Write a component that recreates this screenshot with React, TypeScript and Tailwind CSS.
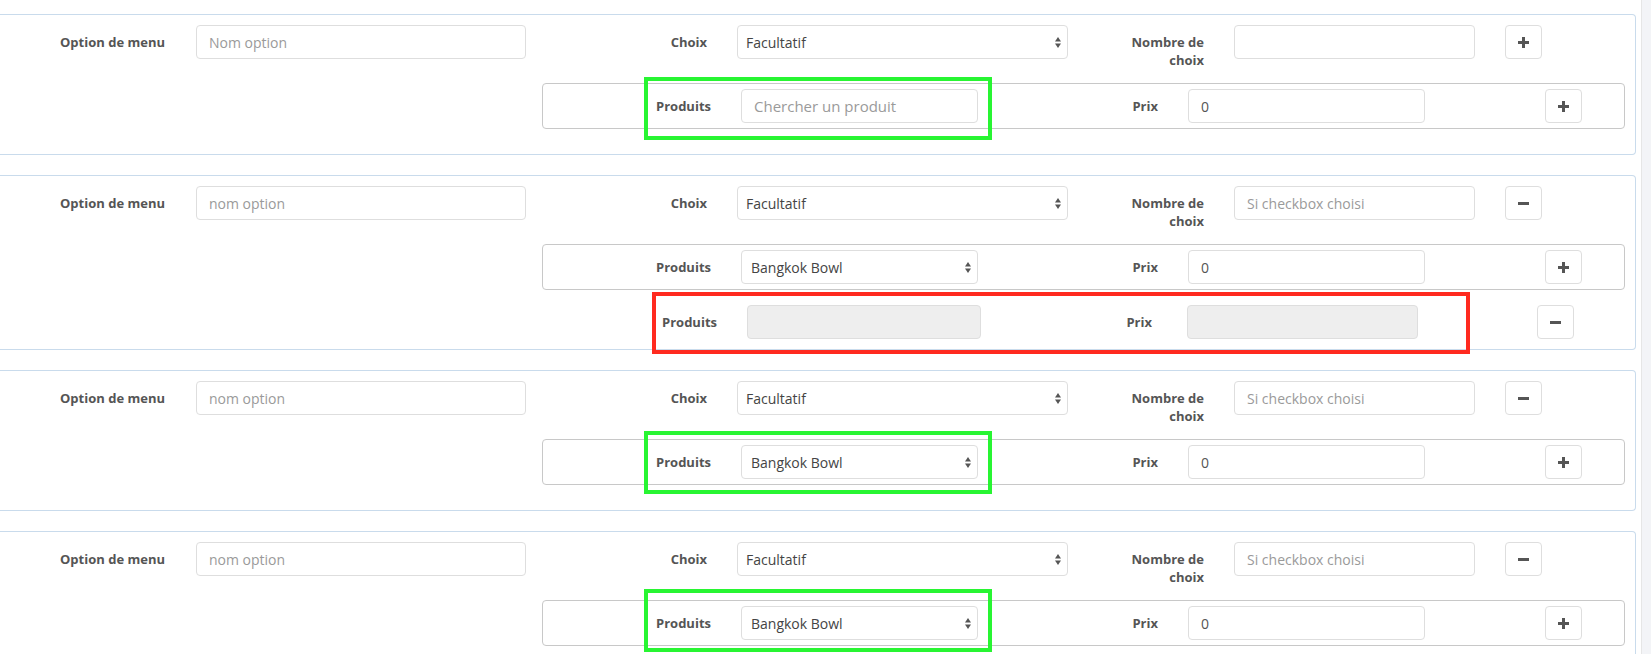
import React from 'react'

// ── petits morceaux réutilisés par chaque bloc « option de menu » ──

function Label({ className, children }: { className: string; children: React.ReactNode }) {
 return (
  <div className={`${className} shrink-0 text-right text-[13px] font-bold leading-[18px] text-[#555] pt-[8px]`}>
   {children}
  </div>
 )
}

function Input({ className, placeholder, value, disabled, large }: {
 className: string; placeholder?: string; value?: string; disabled?: boolean; large?: boolean
}) {
 return (
  <input readOnly disabled={disabled} placeholder={placeholder} value={value ?? ''}
   className={`${className} shrink-0 h-[34px] rounded-[4px] border border-[#dedede] px-[12px] text-[#555] placeholder:text-[#9a9a9a] outline-none ${large ? 'text-[15px]' : 'text-[14px]'} ${disabled ? 'bg-[#eeeeee]' : 'bg-white'}`} />
 )
}

function Arrows() {
 return (
  <svg width="6" height="11" viewBox="0 0 6 11" className="shrink-0">
   <polygon points="3,0 6,4.5 0,4.5" fill="#555" />
   <polygon points="0,6.5 6,6.5 3,11" fill="#555" />
  </svg>
 )
}

function Select({ className, value, inset }: { className: string; value: string; inset: string }) {
 return (
  <div className={`${className} ${inset} shrink-0 h-[34px] rounded-[4px] border border-[#dedede] bg-white pr-[6px] flex items-center justify-between text-[14px] text-[#444]`}>
   <span>{value}</span>
   <Arrows />
  </div>
 )
}

function IconButton({ className, kind }: { className: string; kind: 'plus' | 'minus' }) {
 return (
  <button className={`${className} shrink-0 w-[37px] h-[34px] rounded-[4px] border border-[#dedede] bg-white flex items-center justify-center`}>
   <svg width="11" height="11" viewBox="0 0 11 11">
    <rect x="0" y="4" width="11" height="3" fill="#555" />
    {kind === 'plus' && <rect x="4" y="0" width="3" height="11" fill="#555" />}
   </svg>
  </button>
 )
}

// cadre d'annotation (vert / rouge) posé par-dessus la capture
function Mark({ className }: { className: string }) {
 return <div className={`${className} absolute border-[4px] pointer-events-none`} />
}

type PanelProps = {
 first?: boolean
 mark?: string
 disabledRow?: boolean
}

function OptionPanel({ first, mark, disabledRow }: PanelProps) {
 return (
  <div className="relative border border-l-0 border-[#c9dbec] rounded-r-[4px] pt-[10px] pb-[10px] pr-[10px] mb-[20px]">
   <div className="flex items-start h-[34px] mb-[24px]">
    <Label className="w-[165px]">Option de menu</Label>
    <Input className="ml-[31px] w-[330px]" placeholder={first ? 'Nom option' : 'nom option'} />
    <Label className="w-[181px]">Choix</Label>
    <Select className="ml-[30px] w-[331px]" inset="pl-[8px]" value="Facultatif" />
    <Label className="w-[136px] pl-[52px]">Nombre de choix</Label>
    <Input className="ml-[30px] w-[241px]" placeholder={first ? '' : 'Si checkbox choisi'} />
    <IconButton className="ml-[30px]" kind={first ? 'plus' : 'minus'} />
   </div>

   <div className="relative ml-[542px] border border-[#c8c8c8] rounded-[4px] py-[5px] flex items-start mb-[15px]">
    <Label className="w-[168px]">Produits</Label>
    {first
     ? <Input className="ml-[30px] w-[237px]" placeholder="Chercher un produit" large />
     : <Select className="ml-[30px] w-[237px]" inset="pl-[9px]" value="Bangkok Bowl" />}
    <Label className="w-[180px]">Prix</Label>
    <Input className="ml-[30px] w-[237px]" value="0" />
    <IconButton className="ml-[120px]" kind="plus" />
    {mark && <Mark className={mark} />}
   </div>

   {disabledRow && (
    <div className="relative ml-[542px] flex items-start h-[34px]">
     <Label className="w-[175px]">Produits</Label>
     <Input className="ml-[30px] w-[234px]" disabled />
     <Label className="w-[171px]">Prix</Label>
     <Input className="ml-[35px] w-[231px]" disabled />
     <IconButton className="ml-[119px]" kind="minus" />
     <Mark className="left-[110px] top-[-13px] w-[818px] h-[62px] border-[#ff2a1f]" />
    </div>
   )}
  </div>
 )
}

export default function App() {
 return (
  <div className="flex h-[654px] w-[1651px] overflow-hidden bg-white font-['Open_Sans',sans-serif]">
   <div className="flex-1 pt-[14px] pr-[5px] overflow-hidden">
    <OptionPanel first mark="left-[101px] top-[-7px] w-[348px] h-[63px] border-[#28f532]" />
    <OptionPanel disabledRow />
    <OptionPanel mark="left-[101px] top-[-9px] w-[348px] h-[63px] border-[#28f532]" />
    <OptionPanel mark="left-[101px] top-[-12px] w-[348px] h-[63px] border-[#28f532]" />
   </div>
   <div className="w-[10px] h-full border-l border-[#e6e6e6] bg-[#f3f4f7]" />
  </div>
 )
}
